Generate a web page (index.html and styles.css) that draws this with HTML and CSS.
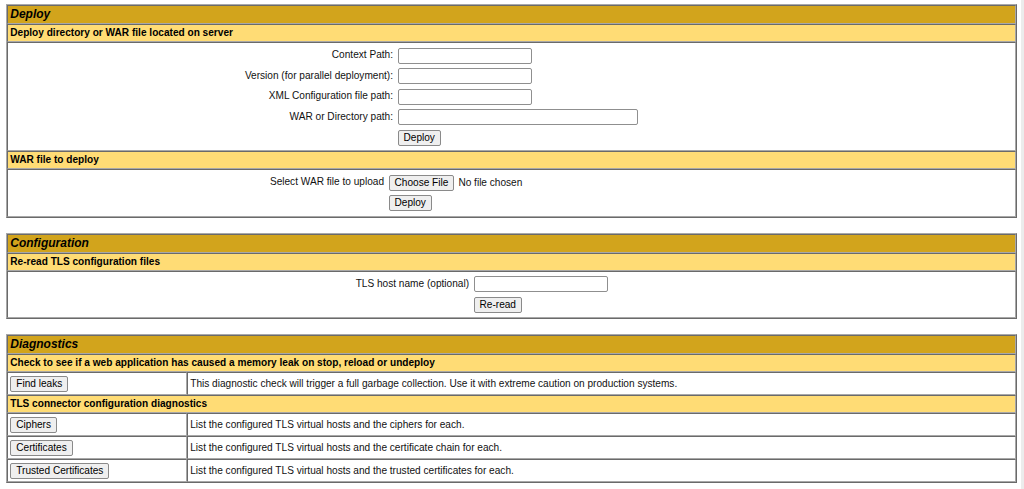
FILE: index.html
```html
<!DOCTYPE html>
<html lang="en">
<head>
<meta charset="utf-8">
<title>Tomcat Web Application Manager</title>
<link rel="stylesheet" href="styles.css">
</head>
<body>
<section class="panel">
  <div class="cell title">Deploy</div>
  <div class="cell header">Deploy directory or WAR file located on server</div>
  <div class="cell body">
    <form class="form-grid deploy-grid">
      <label class="lbl">Context Path:</label>
      <div class="fld"><input class="txt" type="text"></div>
      <label class="lbl">Version (for parallel deployment):</label>
      <div class="fld"><input class="txt" type="text"></div>
      <label class="lbl">XML Configuration file path:</label>
      <div class="fld"><input class="txt" type="text"></div>
      <label class="lbl">WAR or Directory path:</label>
      <div class="fld"><input class="txt wide" type="text"></div>
      <div class="lbl"></div>
      <div class="fld"><button class="btn" type="button">Deploy</button></div>
    </form>
  </div>
  <div class="cell header">WAR file to deploy</div>
  <div class="cell body">
    <form class="form-grid upload-grid">
      <label class="lbl">Select WAR file to upload</label>
      <div class="fld"><button class="btn" type="button">Choose File</button><span class="nofile">No file chosen</span></div>
      <div class="lbl"></div>
      <div class="fld"><button class="btn" type="button">Deploy</button></div>
    </form>
  </div>
</section>

<section class="panel">
  <div class="cell title">Configuration</div>
  <div class="cell header">Re-read TLS configuration files</div>
  <div class="cell body">
    <form class="form-grid tls-grid">
      <label class="lbl">TLS host name (optional)</label>
      <div class="fld"><input class="txt" type="text"></div>
      <div class="lbl"></div>
      <div class="fld"><button class="btn" type="button">Re-read</button></div>
    </form>
  </div>
</section>

<section class="panel">
  <div class="cell title">Diagnostics</div>
  <div class="cell header">Check to see if a web application has caused a memory leak on stop, reload or undeploy</div>
  <div class="diag-row">
    <div class="cell act"><button class="btn" type="button">Find leaks</button></div>
    <div class="cell desc">This diagnostic check will trigger a full garbage collection. Use it with extreme caution on production systems.</div>
  </div>
  <div class="cell header">TLS connector configuration diagnostics</div>
  <div class="diag-row">
    <div class="cell act"><button class="btn" type="button">Ciphers</button></div>
    <div class="cell desc">List the configured TLS virtual hosts and the ciphers for each.</div>
  </div>
  <div class="diag-row">
    <div class="cell act"><button class="btn" type="button">Certificates</button></div>
    <div class="cell desc">List the configured TLS virtual hosts and the certificate chain for each.</div>
  </div>
  <div class="diag-row">
    <div class="cell act"><button class="btn" type="button">Trusted Certificates</button></div>
    <div class="cell desc">List the configured TLS virtual hosts and the trusted certificates for each.</div>
  </div>
</section>
</body>
</html>
```

FILE: styles.css
```css
* { box-sizing: border-box; }

html {
  background: linear-gradient(to left, #ececec 3px, #ffffff 3px);
  min-height: 100%;
}

body {
  margin: 0;
  padding: 4px 0 0 0;
  font-family: "Liberation Sans", Arial, sans-serif;
  font-size: 10.1px;
  color: #111;
}

.panel {
  width: 1011px;
  margin: 0 0 15px 6px;
  border: 1px solid;
  border-color: #a8a8a8 #6a6a6a #6a6a6a #a8a8a8;
}

.cell {
  border: 1px solid;
  border-color: #6a6a6a #a8a8a8 #a8a8a8 #6a6a6a;
}

.title {
  background: #D2A41C;
  color: #000;
  font-size: 12px;
  font-weight: bold;
  font-style: italic;
  line-height: 13px;
  padding: 2px 2.25px;
}

.header {
  background: #FFDC75;
  color: #000;
  font-size: 10.1px;
  font-weight: bold;
  line-height: 12px;
  padding: 2px 2.25px;
}

.body {
  padding: 2.25px;
}

.form-grid {
  display: grid;
  margin: 0;
}

.deploy-grid { grid-template-columns: 385px 1fr; }
.upload-grid { grid-template-columns: 376px 1fr; }
.tls-grid { grid-template-columns: 461px 1fr; }

.lbl {
  text-align: right;
  padding: 4px 2.25px 2px;
  line-height: 11.5px;
  color: #111;
}

.fld {
  display: flex;
  align-items: center;
  height: 20.5px;
  padding: 2.25px;
}

.txt {
  width: 134px;
  height: 16px;
  margin: 0;
  padding: 0 2px;
  border: 1px solid #8f8f8f;
  border-radius: 2px;
  background: #fff;
  font: 10px "Liberation Sans", Arial, sans-serif;
}

.txt.wide { width: 240px; }

.btn {
  height: 16px;
  margin: 0;
  padding: 0 5px;
  border: 1px solid #8a8a8a;
  border-radius: 2px;
  background: #efefef;
  color: #000;
  font: 10.1px/12px "Liberation Sans", Arial, sans-serif;
}

.nofile {
  margin-left: 4px;
  color: #111;
}

.diag-row {
  display: grid;
  grid-template-columns: 180px 1fr;
}

.act {
  display: flex;
  align-items: center;
  padding: 2.5px 2.25px;
  height: 23px;
}

.desc {
  display: flex;
  align-items: center;
  padding: 2.5px 2.25px;
  height: 23px;
}
```
